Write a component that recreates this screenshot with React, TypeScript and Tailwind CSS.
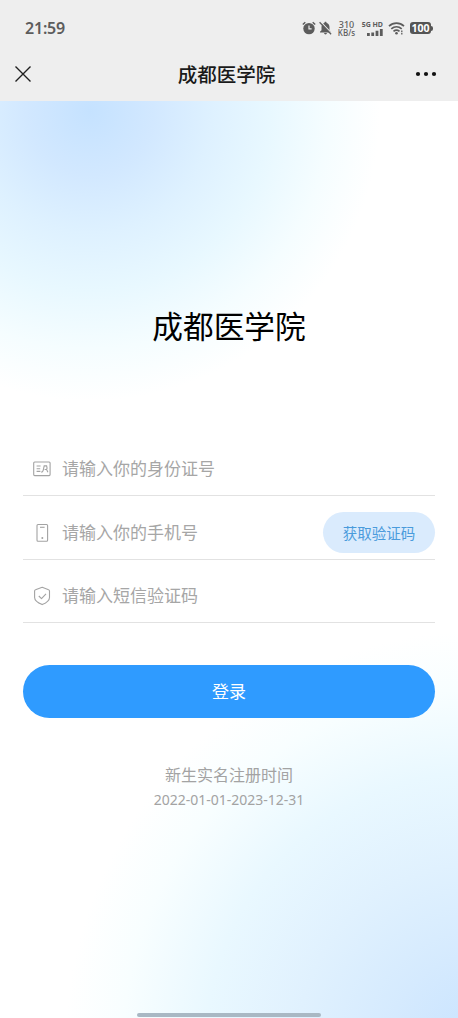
import React from 'react';

const fields = [
  { name: 'idCard', placeholder: '请输入你的身份证号', icon: <IdCardIcon /> },
  {
    name: 'phone',
    placeholder: '请输入你的手机号',
    icon: <PhoneIcon />,
    action: '获取验证码',
  },
  { name: 'code', placeholder: '请输入短信验证码', icon: <ShieldIcon /> },
];

function IdCardIcon() {
  return (
    <svg width="20" height="20" viewBox="0 0 20 20" fill="none" stroke="#a3a3a3" strokeWidth="1.1">
      <rect x="1.7" y="3" width="16.4" height="13.6" rx="1" />
      <path d="M4.6 7h4M4.6 9.7h3.6M4.6 12.4h3.8" />
      <path d="M9.2 13.1c1 0 1.700-.7 2-1.800l1-4.400h2.400l.5 2.300-.7 1.300h-1.800M14.600 10.500l1.300 2.700" />
    </svg>
  );
}

function PhoneIcon() {
  return (
    <svg width="20" height="20" viewBox="0 0 20 20" fill="none" stroke="#a3a3a3" strokeWidth="1.1">
      <rect x="5" y="1.500" width="10.600" height="16.800" rx="1" />
      <path d="M8 4.300h4.600" />
      <circle cx="10.300" cy="15" r="1" fill="#a3a3a3" stroke="none" />
    </svg>
  );
}

function ShieldIcon() {
  return (
    <svg
      width="20"
      height="20"
      viewBox="0 0 20 20"
      fill="none"
      stroke="#a3a3a3"
      strokeWidth="1.1"
      strokeLinejoin="round"
    >
      <path d="M10.200 1.300 16.600 3.700c.6.2.9.6.9 1.200v6.500c0 3.300-3.400 5.500-7.300 7.200-3.900-1.700-7.600-3.900-7.600-7.200V4.900c0-.6.3-1 .9-1.200Z" />
      <path d="m6.800 10 2.700 2.600 4.500-4.700" />
    </svg>
  );
}

const StatusBar = () => {
  return (
    <div className="flex h-14 items-center justify-between px-[25px] text-[#5c5c5c]">
      <span className="font-['Noto_Sans',sans-serif] text-[16px] font-semibold leading-none tracking-[-0.2px]">
        21:59
      </span>
      <div className="flex items-center">
        <svg width="14" height="14" viewBox="0 0 14 14" fill="none">
          <circle cx="7" cy="7.600" r="5.700" fill="#5c5c5c" />
          <path d="M.8 3.500 3.300 1.200M13.200 3.500 10.700 1.200" stroke="#5c5c5c" strokeWidth="1.500" />
          <path d="M7 4.500v3.400h2.600" stroke="#eee" strokeWidth="1.200" />
        </svg>
        <svg className="ml-[3px]" width="13" height="14" viewBox="0 0 13 14" fill="none">
          <path
            d="M6.500.8c.8 0 1.100.5 1.100 1.100 1.900.6 2.900 2.100 2.900 4v3.300l1.500 1.500v.7H1v-.7l1.500-1.500V5.900c0-1.900 1-3.400 2.900-4 0-.6.3-1.100 1.100-1.100ZM5.100 12.100h2.800c0 .8-.6 1.300-1.400 1.300s-1.400-.5-1.400-1.300Z"
            fill="#5c5c5c"
          />
          <path d="M1.500.6 13 12.600" stroke="#eee" strokeWidth="1.200" />
          <path d="M.6 1.300 12.100 13.300" stroke="#5c5c5c" strokeWidth="1.300" />
        </svg>
        <div className="ml-[5px] flex w-[19px] flex-col items-center font-['Noto_Sans',sans-serif] font-medium">
          <span className="text-[9px] leading-[9px]">310</span>
          <span className="text-[8px] leading-[8px]">KB/s</span>
        </div>
        <div className="ml-[5px] flex w-[22px] flex-col items-end">
          <span className="whitespace-nowrap font-['Noto_Sans',sans-serif] text-[7px] font-bold leading-[7px]">
            5G HD
          </span>
          <svg className="mt-px" width="16" height="7" viewBox="0 0 16 7" fill="#5c5c5c">
            <path d="M0 4h2.800v3H0zM4.300 3.500h2.800V7H4.300zM8.600 1.800h2.800V7H8.600zM12.900 0h2.800v7h-2.800z" />
          </svg>
        </div>
        <svg
          className="ml-[5px]"
          width="17"
          height="13"
          viewBox="0 0 17 13"
          fill="none"
          stroke="#5c5c5c"
          strokeWidth="1.700"
        >
          <path d="M1 4.200c4.300-4 10.700-4 15 0M3.300 6.900c3.100-2.700 7.300-2.700 10.400 0M5.500 9.300c1.800-1.500 4.200-1.500 6 0" />
          <circle cx="8.500" cy="11.300" r="1.300" fill="#5c5c5c" stroke="none" />
          <path d="M13.800 8.500v1.700M13.800 11v1.500" strokeWidth="1.300" />
        </svg>
        <div className="ml-[5px] flex items-center">
          <span className="flex h-3 w-[21px] items-center justify-center rounded-[3px] bg-[#555] font-['Noto_Sans',sans-serif] text-[10.500px] font-bold leading-none text-white">
            100
          </span>
          <span className="h-[5px] w-[2px] rounded-r-sm bg-[#555]" />
        </div>
      </div>
    </div>
  );
};

const NavBar = () => {
  return (
    <div className="flex h-9 items-center justify-between pl-[15px] pr-[21px]">
      <svg width="16" height="16" viewBox="0 0 16 16" stroke="#1f1f1f" strokeWidth="1.400">
        <path d="m.5.500 15 15M15.500.500l-15 15" />
      </svg>
      <h1 className="ml-[7px] whitespace-nowrap text-[19.500px] font-medium leading-none text-[#1a1a1a]">
        成都医学院
      </h1>
      <svg width="22" height="6" viewBox="0 0 22 6" fill="#111">
        <circle cx="3" cy="3" r="2.100" />
        <circle cx="11" cy="3" r="2.100" />
        <circle cx="19" cy="3" r="2.100" />
      </svg>
    </div>
  );
};

const App = () => {
  return (
    <div className="flex h-[1018px] w-[458px] flex-col overflow-hidden bg-white font-['Noto_Sans_CJK_SC',sans-serif]">
      <header className="h-[101px] shrink-0 bg-[#eeeeee]">
        <StatusBar />
        <NavBar />
      </header>
      <main className="flex flex-1 flex-col bg-[radial-gradient(circle_290px_at_90px_10px,#c5e2ff_0%,#d2e8ff_22%,#def1ff_42%,#e8f8ff_62%,#f5fdff_82%,#ffffff00_100%),radial-gradient(circle_415px_at_480px_945px,#c8e3ff_0%,#d5eafe_22%,#e0f1fe_44%,#e9f8ff_66%,#f8feff_86%,#ffffff_100%)] px-[23px]">
        <h2 className="mt-[199px] text-center text-[30.700px] leading-[50px] text-black">
          成都医学院
        </h2>
        <form className="mt-[82px] flex flex-col">
          {fields.map((field) => (
            <div
              key={field.name}
              className="flex h-16 items-center border-b border-[#e2e2e2] pl-[9px] pt-[10px] last-of-type:h-[63px]"
            >
              {field.icon}
              <input
                name={field.name}
                placeholder={field.placeholder}
                className="ml-[10px] min-w-0 flex-1 bg-transparent pb-[2px] text-[17px] text-gray-700 outline-none placeholder:text-[#a6a6a6]"
              />
              {field.action && (
                <button
                  type="button"
                  className="h-[41px] w-28 rounded-full bg-[#daebfd] text-[14.500px] text-[#4a9bdc]"
                >
                  {field.action}
                </button>
              )}
            </div>
          ))}
          <button
            type="button"
            className="mt-[42px] h-[53px] rounded-full bg-[#2f9bff] pb-[2px] text-[17px] text-white"
          >
            登录
          </button>
        </form>
        <div className="mt-[44px] text-center text-[#a3a3a3]">
          <p className="text-[16px] leading-[25px]">新生实名注册时间</p>
          <p className="font-['Noto_Sans',sans-serif] text-[14px] leading-[25px]">
            2022-01-01-2023-12-31
          </p>
        </div>
        <div className="mb-px mt-auto h-1 w-[184px] self-center rounded-full bg-[#a9b8c4]" />
      </main>
    </div>
  );
};

export default App;
